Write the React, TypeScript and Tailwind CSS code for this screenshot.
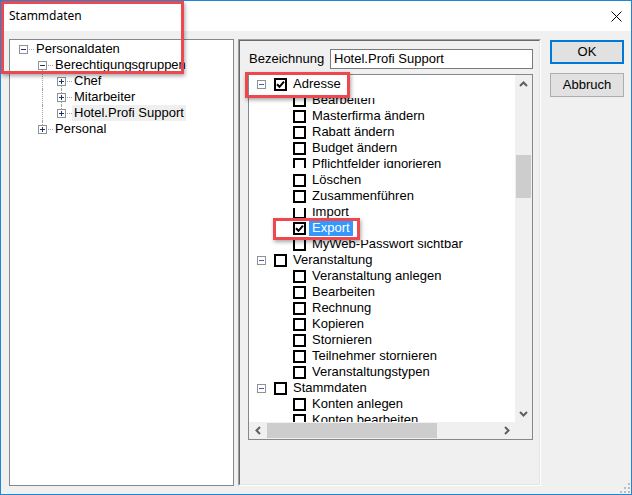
import React from "react";

type LeftRow = {
  label: string;
  plus: boolean;
  guides: boolean[];
  above?: boolean;
  below?: boolean;
  selected?: boolean;
};

const leftRows: LeftRow[] = [
  { label: "Personaldaten", plus: false, guides: [] },
  { label: "Berechtigungsgruppen", plus: false, guides: [false], below: true },
  { label: "Chef", plus: true, guides: [false, true], below: true },
  { label: "Mitarbeiter", plus: true, guides: [false, true], above: true, below: true },
  { label: "Hotel.Profi Support", plus: true, guides: [false, true], above: true, selected: true },
  { label: "Personal", plus: true, guides: [false], above: true },
];

type Item = {
  t: string;
  l: 0 | 1;
  checked?: boolean;
  sel?: boolean;
  clip?: "t6" | "t4" | "b4";
};

const items: Item[] = [
  { t: "Adresse", l: 0, checked: true },
  { t: "Bearbeiten", l: 1, clip: "t6" },
  { t: "Masterfirma ändern", l: 1 },
  { t: "Rabatt ändern", l: 1 },
  { t: "Budget ändern", l: 1 },
  { t: "Pflichtfelder ignorieren", l: 1, clip: "b4" },
  { t: "Löschen", l: 1 },
  { t: "Zusammenführen", l: 1 },
  { t: "Import", l: 1, clip: "t4" },
  { t: "Export", l: 1, checked: true, sel: true },
  { t: "MyWeb-Passwort sichtbar", l: 1, clip: "t4" },
  { t: "Veranstaltung", l: 0 },
  { t: "Veranstaltung anlegen", l: 1 },
  { t: "Bearbeiten", l: 1 },
  { t: "Rechnung", l: 1 },
  { t: "Kopieren", l: 1 },
  { t: "Stornieren", l: 1 },
  { t: "Teilnehmer stornieren", l: 1 },
  { t: "Veranstaltungstypen", l: 1 },
  { t: "Stammdaten", l: 0 },
  { t: "Konten anlegen", l: 1 },
  { t: "Konten bearbeiten", l: 1 },
];

function ExpandBox({ plus, color }: { plus: boolean; color: string }) {
  return (
    <div className="flex h-[9px] w-[9px] shrink-0 items-center justify-center border border-[#919191] bg-white">
      <svg width="7" height="7" viewBox="0 0 7 7" className="block">
        <rect x="1" y="3" width="5" height="1" fill={color} />
        {plus && <rect x="3" y="1" width="1" height="5" fill={color} />}
      </svg>
    </div>
  );
}

function Check({ checked }: { checked?: boolean }) {
  return (
    <div className="flex h-[13px] w-[13px] shrink-0 items-center justify-center border-2 border-black bg-white">
      {checked && (
        <svg width="9" height="9" viewBox="0 0 9 9" className="block">
          <path d="M1 4.2 L3.5 6.8 L8 1.6" fill="none" stroke="#000" strokeWidth="2" />
        </svg>
      )}
    </div>
  );
}

function LeftTreeRow({ row }: { row: LeftRow }) {
  return (
    <div className="flex h-4 pl-[9px]">
      {row.guides.map((g, i) => (
        <div key={i} className="w-[19px] shrink-0">
          {g && <div className="ml-[4px] h-full border-l border-dotted border-[#a0a0a0]" />}
        </div>
      ))}
      <div className="flex w-[15px] shrink-0 flex-col">
        <div className={row.above ? "ml-[4px] h-[4px] border-l border-dotted border-[#a0a0a0]" : "h-[4px]"} />
        <div className="flex h-[9px] items-center">
          <ExpandBox plus={row.plus} color="#1f3366" />
          <div className="ml-[1px] w-[5px] border-t border-dotted border-[#a0a0a0]" />
        </div>
        <div className={row.below ? "ml-[4px] flex-1 border-l border-dotted border-[#a0a0a0]" : "flex-1"} />
      </div>
      <div className={`flex items-center whitespace-nowrap px-[2px] ${row.selected ? "bg-[#efefef]" : ""}`}>
        {row.label}
      </div>
    </div>
  );
}

function ItemContent({ item }: { item: Item }) {
  return (
    <div className="flex h-4 items-center">
      {item.l === 0 ? (
        <>
          <div className="ml-[8px]">
            <ExpandBox plus={false} color="#3a5fc4" />
          </div>
          <div className="ml-[8px]">
            <Check checked={item.checked} />
          </div>
        </>
      ) : (
        <div className="ml-[44px]">
          <Check checked={item.checked} />
        </div>
      )}
      <div
        className={`ml-[3px] flex h-[15px] items-center whitespace-nowrap px-[3px] ${
          item.sel ? "bg-[#3399ff] text-white" : ""
        }`}
      >
        {item.t}
      </div>
    </div>
  );
}

function ItemRow({ item }: { item: Item }) {
  if (item.clip === "t6") {
    return (
      <div className="h-4 pt-[6px]">
        <div className="h-[10px] overflow-hidden">
          <div className="-mt-[6px]">
            <ItemContent item={item} />
          </div>
        </div>
      </div>
    );
  }
  if (item.clip === "t4") {
    return (
      <div className="h-4 pt-[4px]">
        <div className="h-[12px] overflow-hidden">
          <div className="-mt-[4px]">
            <ItemContent item={item} />
          </div>
        </div>
      </div>
    );
  }
  if (item.clip === "b4") {
    return (
      <div className="h-4">
        <div className="h-[12px] overflow-hidden">
          <ItemContent item={item} />
        </div>
      </div>
    );
  }
  return <ItemContent item={item} />;
}

function Chevron({ dir }: { dir: "up" | "down" | "left" | "right" }) {
  if (dir === "up")
    return (
      <svg width="9" height="6" viewBox="0 0 9 6" className="block">
        <polyline points="1,5 4.5,1.5 8,5" fill="none" stroke="#606060" strokeWidth="2" />
      </svg>
    );
  if (dir === "down")
    return (
      <svg width="9" height="6" viewBox="0 0 9 6" className="block">
        <polyline points="1,1 4.5,4.5 8,1" fill="none" stroke="#606060" strokeWidth="2" />
      </svg>
    );
  if (dir === "left")
    return (
      <svg width="6" height="9" viewBox="0 0 6 9" className="block">
        <polyline points="5,1 1.5,4.5 5,8" fill="none" stroke="#606060" strokeWidth="2" />
      </svg>
    );
  return (
    <svg width="6" height="9" viewBox="0 0 6 9" className="block">
      <polyline points="1,1 4.5,4.5 1,8" fill="none" stroke="#606060" strokeWidth="2" />
    </svg>
  );
}

export default function App() {
  return (
    <div className="relative flex h-[495px] w-[632px] flex-col overflow-hidden border border-[#1c87d9] bg-[#f0f0f0] text-[13px] leading-4 text-black [font-family:'Liberation_Sans_Narrow','Liberation_Sans',Arial,sans-serif]">
      {/* Title bar */}
      <div className="flex h-[30px] shrink-0 items-center justify-between bg-white pl-[8px] pr-[9px]">
        <span className="text-[12px] [font-family:'Noto_Sans',sans-serif]">Stammdaten</span>
        <svg width="11" height="11" viewBox="0 0 11 11" className="block">
          <path d="M0.5 0.5 L10.5 10.5 M10.5 0.5 L0.5 10.5" stroke="#000" strokeWidth="1" />
        </svg>
      </div>

      {/* Body */}
      <div className="flex flex-1 pl-[8px] pr-[7px] pt-[8px]">
        {/* Left tree */}
        <div className="h-[447px] w-[225px] shrink-0 border border-[#828790] bg-white pt-[1px]">
          {leftRows.map((r, i) => (
            <LeftTreeRow key={i} row={r} />
          ))}
        </div>

        {/* Right panel */}
        <div className="ml-[4px] h-[447px] w-[303px] shrink-0 border border-t-[#a0a0a0] border-l-[#a0a0a0] border-r-white border-b-white">
          <div className="h-full w-full border border-t-[#696969] border-l-[#696969] border-r-[#e3e3e3] border-b-[#e3e3e3] pl-[8px] pt-[8px]">
            <div className="flex h-[20px] items-center">
              <div className="w-[82px] pl-[1px]">Bezeichnung</div>
              <div className="flex h-[20px] w-[203px] items-center border border-[#7a7a7a] bg-white pl-[3px]">
                Hotel.Profi Support
              </div>
            </div>
            <div className="mt-[5px] flex h-[366px] w-[285px] flex-col border border-[#828790] bg-white">
              <div className="flex h-[347px]">
                <div className="h-[347px] w-[266px] overflow-hidden pt-[1px]">
                  {items.map((it, i) => (
                    <ItemRow key={i} item={it} />
                  ))}
                </div>
                <div className="flex w-[17px] flex-col bg-[#f0f0f0]">
                  <div className="flex h-[17px] items-center justify-center">
                    <Chevron dir="up" />
                  </div>
                  <div className="h-[63px]" />
                  <div className="mx-[1px] h-[43px] bg-[#cdcdcd]" />
                  <div className="flex-1" />
                  <div className="flex h-[17px] items-center justify-center">
                    <Chevron dir="down" />
                  </div>
                </div>
              </div>
              <div className="flex h-[17px] bg-[#f0f0f0]">
                <div className="flex w-[17px] items-center justify-center">
                  <Chevron dir="left" />
                </div>
                <div className="my-[1px] ml-[1px] w-[170px] bg-[#cdcdcd]" />
                <div className="flex-1" />
                <div className="flex w-[17px] items-center justify-center">
                  <Chevron dir="right" />
                </div>
                <div className="w-[17px]" />
              </div>
            </div>
          </div>
        </div>

        {/* Buttons */}
        <div className="ml-[9px] mt-[1px] flex w-[74px] shrink-0 flex-col gap-[9px]">
          <div className="flex h-[24px] items-center justify-center border-2 border-[#0078d7] bg-[#e1e1e1]">OK</div>
          <div className="flex h-[24px] items-center justify-center border border-[#adadad] bg-[#e1e1e1]">Abbruch</div>
        </div>
      </div>

      {/* Resize grip */}
      <svg width="10" height="10" viewBox="0 0 10 10" className="absolute bottom-[1px] right-[1px] block">
        <rect x="8" y="0" width="2" height="2" fill="#bcbcbc" />
        <rect x="4" y="4" width="2" height="2" fill="#bcbcbc" />
        <rect x="8" y="4" width="2" height="2" fill="#bcbcbc" />
        <rect x="0" y="8" width="2" height="2" fill="#bcbcbc" />
        <rect x="4" y="8" width="2" height="2" fill="#bcbcbc" />
        <rect x="8" y="8" width="2" height="2" fill="#bcbcbc" />
      </svg>

      {/* Red annotation boxes */}
      <div className="absolute left-0 top-0 h-[73px] w-[183px] border-[3px] border-[#ec484d] shadow-[1px_2px_4px_rgba(0,0,0,0.35)]" />
      <div className="absolute left-[244px] top-[71px] h-[26px] w-[105px] border-[3px] border-[#ec484d] shadow-[1px_2px_4px_rgba(0,0,0,0.35)]" />
      <div className="absolute left-[272px] top-[217px] h-[22px] w-[87px] border-[3px] border-[#ec484d] shadow-[1px_2px_4px_rgba(0,0,0,0.35)]" />
    </div>
  );
}
